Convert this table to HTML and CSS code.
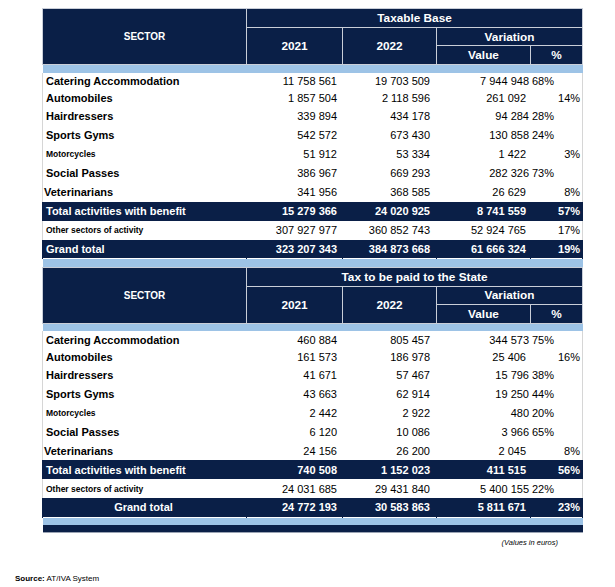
FILE: index.html
```html
<!DOCTYPE html>
<html lang="en">
<head>
    <meta charset="UTF-8">
    <meta name="viewport" content="width=device-width, initial-scale=1.0">
    <title>Taxable Base and Tax</title>
    <link rel="stylesheet" href="styles.css">
</head>
<body>
    <main class="page">
        <table class="report">
            <colgroup>
                <col class="c-sector"><col class="c-year"><col class="c-year2"><col class="c-value"><col class="c-pct">
            </colgroup>
            <thead>
                <tr class="h1">
                    <th rowspan="3" class="sector-head">SECTOR</th>
                    <th colspan="4">Taxable Base</th>
                </tr>
                <tr class="h2">
                    <th rowspan="2">2021</th>
                    <th rowspan="2">2022</th>
                    <th colspan="2">Variation</th>
                </tr>
                <tr class="h3">
                    <th>Value</th>
                    <th>%</th>
                </tr>
            </thead>
            <tbody>
                <tr class="band"><td colspan="5"></td></tr>
                <tr class="row short"><td class="name">Catering Accommodation</td><td>11 758 561</td><td>19 703 509</td><td class="val tight">7 944 948</td><td class="pct left">68%</td></tr>
                <tr class="row short"><td class="name">Automobiles</td><td>1 857 504</td><td>2 118 596</td><td class="val">261 092</td><td class="pct">14%</td></tr>
                <tr class="row"><td class="name">Hairdressers</td><td>339 894</td><td>434 178</td><td class="val tight">94 284</td><td class="pct left">28%</td></tr>
                <tr class="row"><td class="name">Sports Gyms</td><td>542 572</td><td>673 430</td><td class="val tight">130 858</td><td class="pct left">24%</td></tr>
                <tr class="row"><td class="name small">Motorcycles</td><td>51 912</td><td>53 334</td><td class="val">1 422</td><td class="pct">3%</td></tr>
                <tr class="row"><td class="name">Social Passes</td><td>386 967</td><td>669 293</td><td class="val tight">282 326</td><td class="pct left">73%</td></tr>
                <tr class="row"><td class="name flush">Veterinarians</td><td>341 956</td><td>368 585</td><td class="val">26 629</td><td class="pct">8%</td></tr>
                <tr class="row total"><td class="name">Total activities with benefit</td><td>15 279 366</td><td>24 020 925</td><td class="val">8 741 559</td><td class="pct">57%</td></tr>
                <tr class="row"><td class="name small">Other sectors of activity</td><td>307 927 977</td><td>360 852 743</td><td class="val">52 924 765</td><td class="pct">17%</td></tr>
                <tr class="row total"><td class="name">Grand total</td><td>323 207 343</td><td>384 873 668</td><td class="val">61 666 324</td><td class="pct">19%</td></tr>
                <tr class="band"><td colspan="5"></td></tr>
            </tbody>
        </table>

        <table class="report">
            <colgroup>
                <col class="c-sector"><col class="c-year"><col class="c-year2"><col class="c-value"><col class="c-pct">
            </colgroup>
            <thead>
                <tr class="h1">
                    <th rowspan="3" class="sector-head">SECTOR</th>
                    <th colspan="4">Tax to be paid to the State</th>
                </tr>
                <tr class="h2">
                    <th rowspan="2">2021</th>
                    <th rowspan="2">2022</th>
                    <th colspan="2">Variation</th>
                </tr>
                <tr class="h3">
                    <th>Value</th>
                    <th>%</th>
                </tr>
            </thead>
            <tbody>
                <tr class="band"><td colspan="5"></td></tr>
                <tr class="row short"><td class="name">Catering Accommodation</td><td>460 884</td><td>805 457</td><td class="val tight">344 573</td><td class="pct left">75%</td></tr>
                <tr class="row short"><td class="name">Automobiles</td><td>161 573</td><td>186 978</td><td class="val">25 406</td><td class="pct">16%</td></tr>
                <tr class="row"><td class="name">Hairdressers</td><td>41 671</td><td>57 467</td><td class="val tight">15 796</td><td class="pct left">38%</td></tr>
                <tr class="row"><td class="name">Sports Gyms</td><td>43 663</td><td>62 914</td><td class="val tight">19 250</td><td class="pct left">44%</td></tr>
                <tr class="row"><td class="name small">Motorcycles</td><td>2 442</td><td>2 922</td><td class="val tight">480</td><td class="pct left">20%</td></tr>
                <tr class="row"><td class="name">Social Passes</td><td>6 120</td><td>10 086</td><td class="val tight">3 966</td><td class="pct left">65%</td></tr>
                <tr class="row"><td class="name flush">Veterinarians</td><td>24 156</td><td>26 200</td><td class="val">2 045</td><td class="pct">8%</td></tr>
                <tr class="row total"><td class="name">Total activities with benefit</td><td>740 508</td><td>1 152 023</td><td class="val">411 515</td><td class="pct">56%</td></tr>
                <tr class="row"><td class="name small">Other sectors of activity</td><td>24 031 685</td><td>29 431 840</td><td class="val tight">5 400 155</td><td class="pct left">22%</td></tr>
                <tr class="row total"><td class="name center">Grand total</td><td>24 772 193</td><td>30 583 863</td><td class="val">5 811 671</td><td class="pct">23%</td></tr>
                <tr class="band"><td colspan="5"></td></tr>
                <tr class="foot-bar"><td colspan="5"></td></tr>
            </tbody>
        </table>

        <p class="unit">(Values in euros)</p>
        <p class="source"><b>Source:</b> AT/IVA System</p>
    </main>
</body>
</html>
```

FILE: styles.css
```css
*,*::before,*::after
{
    box-sizing: border-box;
}
body
{
    margin: 0;
    font-family: "Liberation Sans", Arial, sans-serif;
    color: #000;
    background: #fff;
}
.page
{
    display: flex;
    flex-direction: column;
    padding-top: 8px;
}
.report
{
    width: 540px;
    margin-left: 42px;
    border-collapse: collapse;
    table-layout: fixed;
}
.c-sector { width: 204px; }
.c-year { width: 96px; }
.c-year2 { width: 94px; }
.c-value { width: 94px; }
.c-pct { width: 52px; }

/* header block */
.report th
{
    background-color: #0a1f47;
    color: #fff;
    font-weight: bold;
    font-size: 11.8px;
    padding: 0;
    border: 1px solid #c9ced8;
    text-align: center;
}
.report .h1 th { height: 19px; }
.report .h2 th { height: 18px; }
.report .h3 th { height: 19px; }
.report th.sector-head
{
    font-size: 10px;
}

/* light blue separators */
.band td
{
    height: 8px;
    padding: 0;
    background-color: #9dc3e6;
    border-top: 1px solid #fff;
}
.foot-bar td
{
    height: 7px;
    padding: 0;
    background-color: #0a1f47;
    border-bottom: 1px solid #9aa3b3;
}

/* data rows */
.row td
{
    height: 19px;
    padding: 0 5px 0 0;
    font-size: 11px;
    text-align: right;
    white-space: nowrap;
    border-right: 1px solid transparent;
}
.row.short td { height: 17px; }
.row td:first-child { border-left: 1px solid #d6d6d6; }
.row td:last-child { border-right: 1px solid #d6d6d6; }
.row td:nth-child(3) { padding-right: 6px; }
.row td.val { padding-right: 4px; }
.row td.val.tight { padding-right: 1px; }
.row td.pct { padding-right: 2px; }
.row td.pct.left
{
    text-align: left;
    padding-left: 1px;
}
.row td.name
{
    text-align: left;
    padding-left: 3px;
    font-weight: bold;
    font-size: 11px;
}
.row td.name.small { font-size: 8.5px; }
.row td.name.flush { padding-left: 1px; }
.row td.name.center { text-align: center; }

.row.total td
{
    background-color: #0a1f47;
    color: #fff;
    font-weight: bold;
    border-left-color: #0a1f47;
    border-right-color: #0a1f47;
}

.unit
{
    margin: 5px 0 0 0;
    width: 558px;
    text-align: right;
    font-size: 7.5px;
    font-style: italic;
}
.source
{
    margin: 27px 0 0 15px;
    font-size: 8px;
}
```
